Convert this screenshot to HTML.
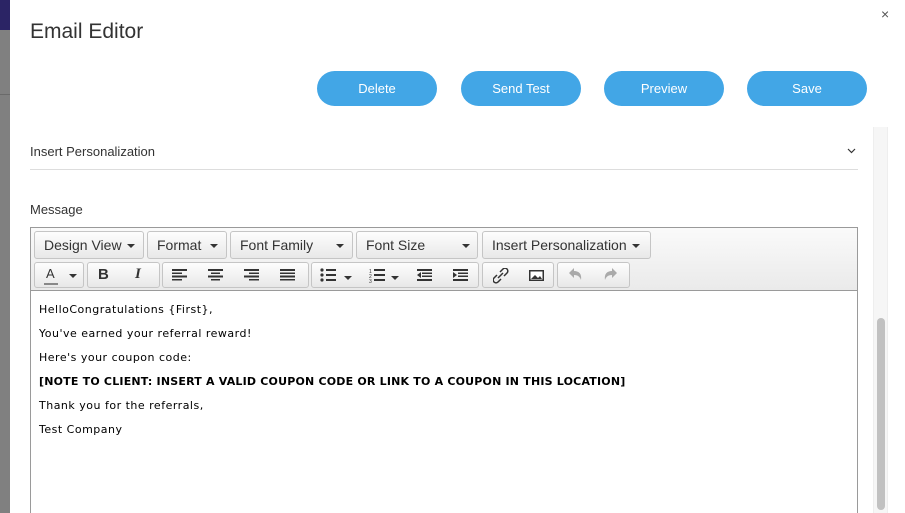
<!DOCTYPE html>
<html style="width:905px;height:513px;overflow:hidden"><head><style>
*{box-sizing:border-box;margin:0;padding:0}
body{width:905px;height:513px;overflow:hidden;background:#fff;font-family:"Liberation Sans",sans-serif;position:relative;color:#333}
.a{position:absolute}
.btn{position:absolute;top:71px;width:120px;height:35px;border-radius:18px;background:#42a6e6;color:#fff;font-size:13px;text-align:center;line-height:35px}
.tb{position:absolute;height:28px;border:1px solid #c5c5c5;border-radius:3px;background:linear-gradient(#fdfdfd,#e8e8e8);font-size:14px;color:#333;line-height:26px;padding-left:9px}
.car{position:absolute;top:12px;width:0;height:0;border-left:4px solid transparent;border-right:4px solid transparent;border-top:4px solid #333}
.tb2{position:absolute;top:262px;height:26px;border:1px solid #c5c5c5;border-radius:3px;background:linear-gradient(#fdfdfd,#e8e8e8)}
.ic{position:absolute;top:5px}
.ed p{font-family:"DejaVu Sans",Verdana,sans-serif;font-size:11px;color:#000;height:24px;line-height:17px;letter-spacing:0.5px}
</style></head><body>
<div class="a" style="left:0;top:0;width:10px;height:30px;background:#2b2465"></div>
<div class="a" style="left:0;top:30px;width:10px;height:483px;background:#808080"></div>
<div class="a" style="left:0;top:94px;width:10px;height:1px;background:#6a6a6a"></div>
<div class="a" style="left:30px;top:20px;font-size:21px;color:#333">Email Editor</div>
<div class="a" style="left:881px;top:6px;font-size:14px;color:#555">×</div>
<div class="btn" style="left:317px">Delete</div>
<div class="btn" style="left:461px">Send Test</div>
<div class="btn" style="left:604px">Preview</div>
<div class="btn" style="left:747px">Save</div>
<div class="a" style="left:30px;top:144px;font-size:13px;color:#333">Insert Personalization</div>
<svg class="a" style="left:847px;top:148px" width="9" height="6"><path d="M1 1l3.5 3.5L8 1" fill="none" stroke="#333" stroke-width="1.2"/></svg>
<div class="a" style="left:30px;top:169px;width:828px;height:1px;background:#ddd"></div>
<div class="a" style="left:30px;top:202px;font-size:13px;color:#333">Message</div>
<div class="a" style="left:873px;top:127px;width:15px;height:386px;background:#f6f6f6;border-left:1px solid #eee;border-right:1px solid #eee"></div>
<div class="a" style="left:877px;top:318px;width:8px;height:192px;border-radius:4px;background:#c1c1c1"></div>
<div class="a" style="left:30px;top:227px;width:828px;height:286px;border:1px solid #9a9a9a;border-bottom:none;background:#fff"></div>
<div class="a" style="left:31px;top:228px;width:826px;height:63px;background:linear-gradient(#fafafa,#eaeaea);border-bottom:1px solid #9a9a9a"></div>
<div class="tb" style="left:34px;top:231px;width:110px">Design View<span class="car" style="left:92px"></span></div>
<div class="tb" style="left:147px;top:231px;width:80px">Format<span class="car" style="left:62px"></span></div>
<div class="tb" style="left:230px;top:231px;width:123px">Font Family<span class="car" style="left:105px"></span></div>
<div class="tb" style="left:356px;top:231px;width:122px">Font Size<span class="car" style="left:105px"></span></div>
<div class="tb" style="left:482px;top:231px;width:169px">Insert Personalization<span class="car" style="left:149px"></span></div>
<div class="tb2" style="left:34px;width:50px"><span class="a" style="left:11px;top:3px;font-size:13px;color:#333">A</span><span class="a" style="left:9px;top:20px;width:14px;height:2px;background:#888"></span><span class="car" style="left:34px;top:11px"></span></div>
<div class="tb2" style="left:87px;width:73px"><span class="a" style="left:10px;top:3px;font-size:15px;font-weight:bold;color:#333">B</span><span class="a" style="left:47px;top:3px;font-size:15px;font-style:italic;font-weight:bold;color:#333;font-family:'Liberation Serif',serif">I</span></div>
<div class="tb2" style="left:162px;width:147px">
<svg class="ic" style="left:9px" width="130" height="14">
<g fill="#333"><rect x="0" y="1" width="15" height="2"/><rect x="0" y="4.5" width="10" height="1.5"/><rect x="0" y="7.5" width="15" height="2"/><rect x="0" y="11" width="10" height="1.5"/>
<rect x="36" y="1" width="15" height="2"/><rect x="39" y="4.5" width="9" height="1.5"/><rect x="36" y="7.5" width="15" height="2"/><rect x="39" y="11" width="9" height="1.5"/>
<rect x="72" y="1" width="15" height="2"/><rect x="77" y="4.5" width="10" height="1.5"/><rect x="72" y="7.5" width="15" height="2"/><rect x="77" y="11" width="10" height="1.5"/>
<rect x="108" y="1" width="15" height="2"/><rect x="108" y="4.5" width="15" height="1.5"/><rect x="108" y="7.5" width="15" height="2"/><rect x="108" y="11" width="15" height="1.5"/></g></svg></div>
<div class="tb2" style="left:311px;width:168px">
<svg class="ic" style="left:8px" width="150" height="16"><g fill="#333">
<circle cx="2" cy="2" r="1.6"/><circle cx="2" cy="7" r="1.6"/><circle cx="2" cy="12" r="1.6"/><rect x="6" y="1" width="10" height="2"/><rect x="6" y="6" width="10" height="2"/><rect x="6" y="11" width="10" height="2"/>
<path d="M24 8h8l-4 4z"/>
<text x="49" y="5" font-size="5" font-family="Liberation Sans">1</text><text x="49" y="10" font-size="5" font-family="Liberation Sans">2</text><text x="49" y="15" font-size="5" font-family="Liberation Sans">3</text>
<rect x="54" y="1" width="11" height="2"/><rect x="54" y="6" width="11" height="2"/><rect x="54" y="11" width="11" height="2"/>
<path d="M71 8h8l-4 4z"/>
<rect x="97" y="1" width="15" height="2"/><rect x="102" y="4.5" width="10" height="1.5"/><rect x="102" y="7.5" width="10" height="1.5"/><rect x="97" y="11" width="15" height="2"/><path d="M101 4v6l-4-3z"/>
<rect x="133" y="1" width="15" height="2"/><rect x="138" y="4.5" width="10" height="1.5"/><rect x="138" y="7.5" width="10" height="1.5"/><rect x="133" y="11" width="15" height="2"/><path d="M133 4v6l4-3z"/>
</g></svg></div>
<div class="tb2" style="left:482px;width:72px">
<svg class="ic" style="left:10px" width="58" height="16"><g fill="none" stroke="#333" stroke-width="1.5"><path d="M7 4l3-3a2.5 2.5 0 0 1 4 4l-3 3"/><path d="M8 11l-3 3a2.5 2.5 0 0 1-4-4l3-3"/><path d="M5 10l5-5"/></g>
<rect x="36" y="2" width="15" height="11" fill="#333"/><rect x="37.5" y="3.5" width="12" height="8" fill="#fff"/><path d="M38 11l4-4 3 3 2-2 2 3z" fill="#333"/></svg></div>
<div class="tb2" style="left:557px;width:73px">
<svg class="ic" style="left:11px" width="55" height="14"><g fill="#aaa"><path d="M0 5l5-5v3c5 0 8 3 7 9c-1-3-3-5-7-5v3z"/><path d="M48 5l-5-5v3c-5 0-8 3-7 9c1-3 3-5 7-5v3z"/></g></svg></div>
<div class="a ed" style="left:39px;top:301px">
<p>HelloCongratulations {First},</p>
<p>You've earned your referral reward!</p>
<p>Here's your coupon code:</p>
<p style="font-weight:bold;letter-spacing:0.2px">[NOTE TO CLIENT: INSERT A VALID COUPON CODE OR LINK TO A COUPON IN THIS LOCATION]</p>
<p>Thank you for the referrals,</p>
<p>Test Company</p>
</div>
</body></html>
